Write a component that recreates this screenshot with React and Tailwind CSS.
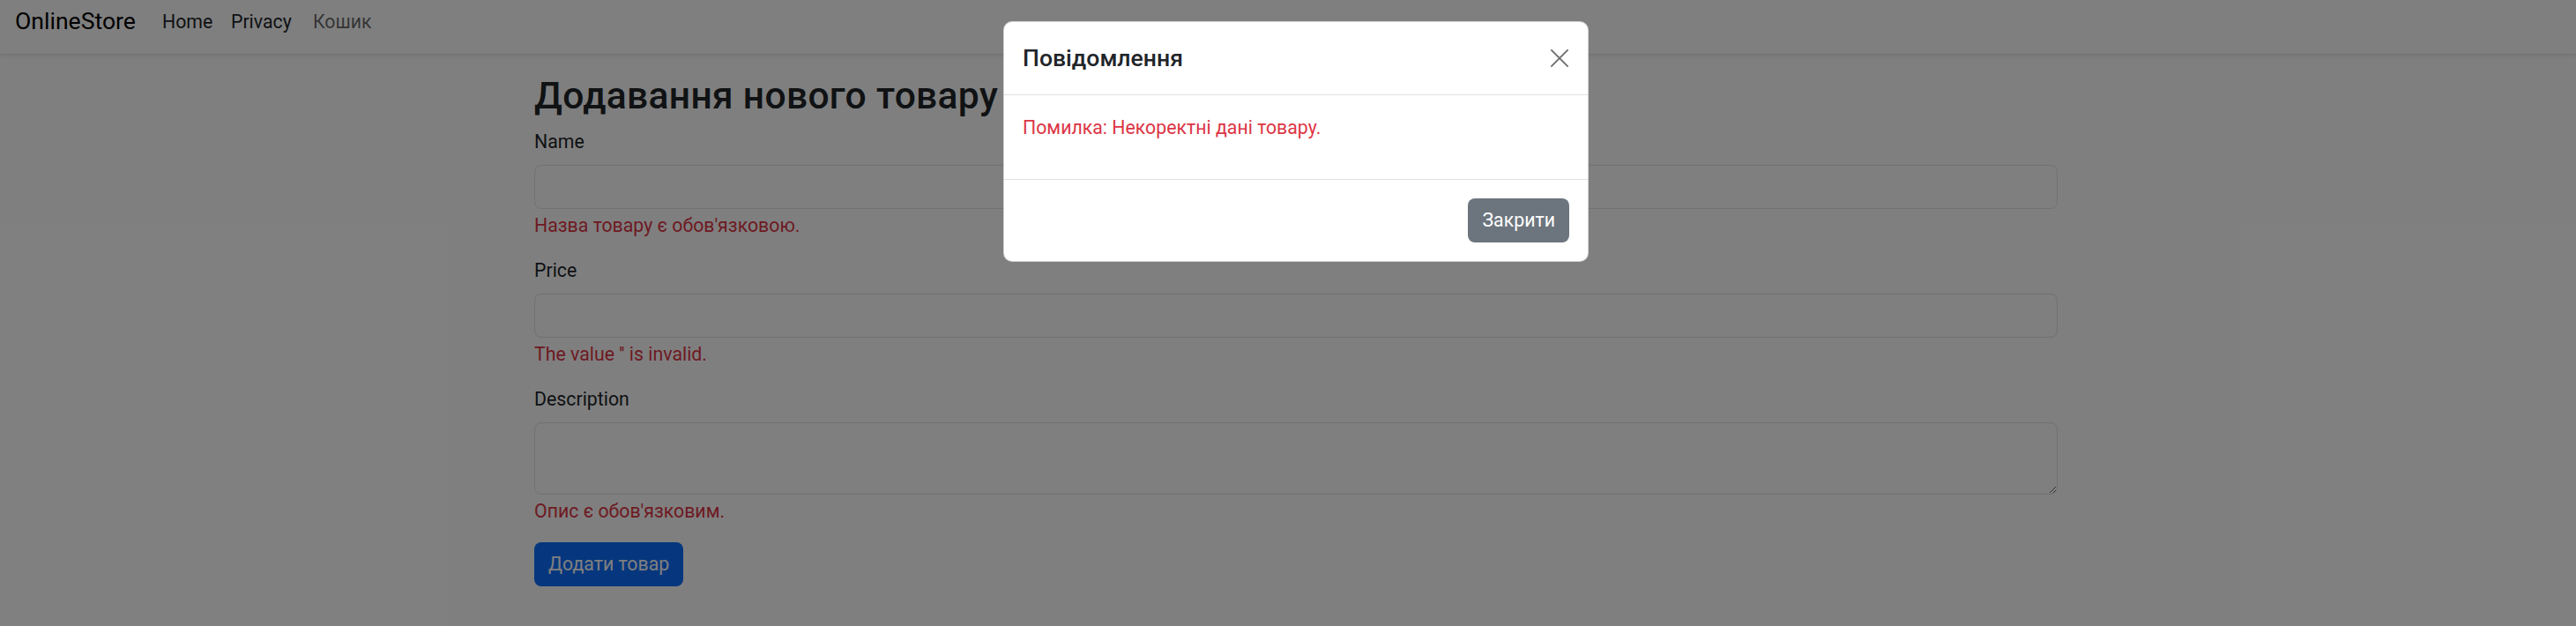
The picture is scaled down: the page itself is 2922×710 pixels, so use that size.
import React from "react";

const fields = [
  { label: "Name", error: "Назва товару є обов'язковою.", type: "input" },
  { label: "Price", error: "The value '' is invalid.", type: "input" },
  { label: "Description", error: "Опис є обов'язковим.", type: "textarea" },
];

const Navbar = () => (
  <nav className="h-[62px] bg-white border-b border-[#dee2e6] shadow-[0_2px_6px_rgba(0,0,0,0.08)] flex items-start pl-[17px] pt-[8px]">
    <span className="text-[26.6px] leading-[32px] text-[#000000] mr-[30px]">OnlineStore</span>
    <div className="flex items-center pt-[1px]">
      <a className="text-[21.3px] leading-[32px] text-[#212529] w-[78px]">Home</a>
      <a className="text-[21.3px] leading-[32px] text-[#212529] w-[93px]">Privacy</a>
      <a className="text-[21.3px] leading-[32px] text-[rgba(0,0,0,0.6)]">Кошик</a>
    </div>
  </nav>
);

const ProductForm = () => (
  <div className="flex justify-center pl-[18px] pt-[21px]">
    <div className="w-[1728px]">
      <h2 className="text-[42.6px] leading-[51px] font-medium tracking-[0.3px] text-[#212529] mb-[11px]">
        Додавання нового товару
      </h2>
      {fields.map((f) => (
        <div key={f.label} className="mb-[21px]">
          <label className="block text-[21.3px] leading-[32px] text-[#212529] mb-[10px]">{f.label}</label>
          {f.type === "input" ? (
            <input className="block w-full h-[50px] border border-[#dee2e6] rounded-[8px] bg-white" />
          ) : (
            <textarea className="block w-full h-[82px] border border-[#dee2e6] rounded-[8px] bg-white" />
          )}
          <div className="mt-[5px] text-[21.3px] leading-[28px] text-[#dc3545]">{f.error}</div>
        </div>
      ))}
      <button className="h-[50px] px-[16px] rounded-[8px] bg-[#0d6efd] text-white text-[21.3px] leading-[32px]">
        Додати товар
      </button>
    </div>
  </div>
);

const Modal = () => (
  <div className="absolute inset-0 flex justify-center pl-[18px] pt-[24px]">
    <div className="w-[664px] h-fit bg-white rounded-[10px] border border-[rgba(0,0,0,0.175)] flex flex-col">
      <div className="flex items-start justify-between px-[21px] py-[21px] border-b border-[#dee2e6]">
        <h5 className="text-[26.6px] leading-[40px] font-medium text-[#212529]">Повідомлення</h5>
        <button className="w-[22px] h-[22px] mt-[9px] text-[#6e6e6e]">
          <svg viewBox="0 0 16 16" width="22" height="22" fill="none" stroke="currentColor" strokeWidth="1.4">
            <path d="M1 1L15 15M15 1L1 15" />
          </svg>
        </button>
      </div>
      <div className="px-[21px] pt-[21px] pb-[21px] border-b border-[#dee2e6]">
        <p className="text-[21.3px] leading-[32px] text-[#dc3545] mb-[21px]">Помилка: Некоректні дані товару.</p>
      </div>
      <div className="flex justify-end px-[21px] py-[21px]">
        <button className="h-[50px] px-[16px] rounded-[8px] bg-[#6c757d] text-white text-[21.3px] leading-[32px]">
          Закрити
        </button>
      </div>
    </div>
  </div>
);

export default function App() {
  return (
    <div className="relative min-h-[710px] bg-white font-['Roboto','Liberation_Sans',sans-serif] overflow-hidden">
      <Navbar />
      <ProductForm />
      <div className="absolute inset-0 bg-black/50" />
      <Modal />
    </div>
  );
}
